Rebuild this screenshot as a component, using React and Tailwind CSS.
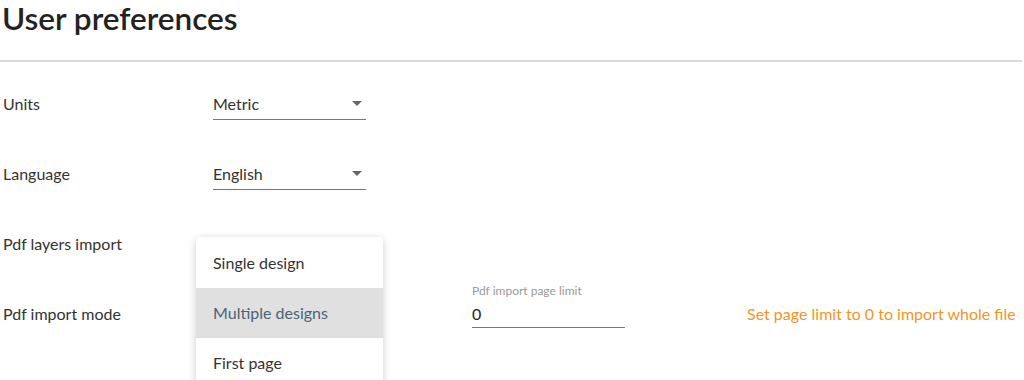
import React from "react";

const font = { fontFamily: "Lato, 'Noto Sans', sans-serif" };

function Select({ value }) {
  return (
    <div className="w-[153px] h-[32px] flex items-center justify-between border-b border-[#777] text-[16px] text-[#333]">
      <span>{value}</span>
      <span className="mr-[4px] w-0 h-0 border-l-[5px] border-r-[5px] border-t-[5px] border-l-transparent border-r-transparent border-t-[#666]" />
    </div>
  );
}

function Row({ label, children }) {
  return (
    <div className="h-[70px] flex items-center">
      <div className="w-[210px] text-[16px] text-[#333]">{label}</div>
      {children}
    </div>
  );
}

export default function App() {
  const options = ["Single design", "Multiple designs", "First page"];
  return (
    <div className="w-[1024px] h-[380px] overflow-hidden bg-white relative" style={font}>
      <h1 className="pl-[2px] text-[31.5px] leading-[36px] font-semibold text-[#222]">
        User preferences
      </h1>
      <div className="mt-[24px] mr-[2px] h-[2px] bg-[#d9d9d9]" />
      <div className="pl-[3px] mt-[7px]">
        <Row label="Units">
          <Select value="Metric" />
        </Row>
        <Row label="Language">
          <Select value="English" />
        </Row>
        <Row label="Pdf layers import">
          <div className="w-[153px]" />
        </Row>
        <Row label="Pdf import mode">
          <div className="w-[153px]" />
          <div className="ml-[106px] w-[153px] mt-[-18px]">
            <div className="text-[12px] text-[#999] leading-[16px]">Pdf import page limit</div>
            <div className="mt-[3px] h-[26px] flex items-center border-b border-[#777] text-[16px] text-[#222]">0</div>
          </div>
          <div className="ml-[122px] text-[16px] text-[#f7931e]">Set page limit to 0 to import whole file</div>
        </Row>
      </div>

      {/* dropdown menu */}
      <div className="absolute left-[196px] top-[237px] w-[187px] bg-white rounded-[4px] shadow-[0_2px_8px_rgba(0,0,0,0.2)] py-[1px]">
        {options.map((o, i) => (
          <div
            key={o}
            className={`h-[50px] flex items-center px-[17px] text-[16px] ${
              i === 1 ? "bg-[#e0e0e0] text-[#4a6378]" : "text-[#333]"
            }`}
          >
            {o}
          </div>
        ))}
      </div>
    </div>
  );
}
